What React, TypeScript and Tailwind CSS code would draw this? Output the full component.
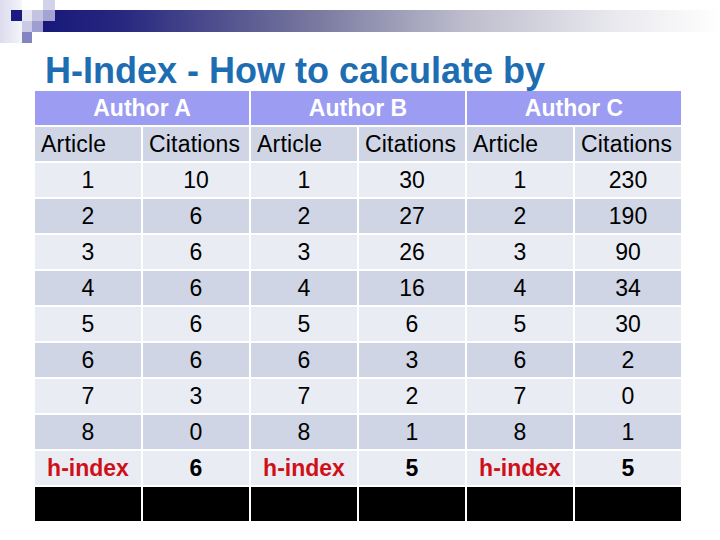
import React from "react";

const rows: string[][] = [
  ["1", "10", "1", "30", "1", "230"],
  ["2", "6", "2", "27", "2", "190"],
  ["3", "6", "3", "26", "3", "90"],
  ["4", "6", "4", "16", "4", "34"],
  ["5", "6", "5", "6", "5", "30"],
  ["6", "6", "6", "3", "6", "2"],
  ["7", "3", "7", "2", "7", "0"],
  ["8", "0", "8", "1", "8", "1"],
];

function Decoration() {
  return (
    <svg width="720" height="52" viewBox="0 0 720 52" className="block">
      <defs>
        <linearGradient id="bar" x1="0" y1="0" x2="1" y2="0">
          <stop offset="0" stopColor="#18187a" />
          <stop offset="0.12" stopColor="#282880" />
          <stop offset="0.38" stopColor="#72729c" />
          <stop offset="0.62" stopColor="#bcbccc" />
          <stop offset="0.84" stopColor="#e8e8ee" />
          <stop offset="1" stopColor="#ffffff" />
        </linearGradient>
        <linearGradient id="fade" x1="0" y1="0" x2="1" y2="0">
          <stop offset="0" stopColor="#dcdcee" />
          <stop offset="1" stopColor="#f4f4fa" />
        </linearGradient>
      </defs>
      <rect x="0" y="0" width="22" height="43" fill="url(#fade)" />
      <rect x="43" y="10" width="677" height="22" fill="url(#bar)" />
      <rect x="11" y="10" width="11" height="11" fill="#1a1a82" />
      <rect x="22" y="10" width="10" height="11" fill="#e6e6f2" />
      <rect x="32" y="10" width="11" height="11" fill="#c4c4e2" />
      <rect x="43" y="0" width="12" height="10" fill="#d2d2ea" />
      <rect x="43" y="10" width="12" height="11" fill="#a4a4d4" />
      <rect x="22" y="21" width="10" height="11" fill="#cacae6" />
      <rect x="32" y="21" width="11" height="11" fill="#9e9ed2" />
      <rect x="22" y="32" width="10" height="11" fill="#8484c2" />
    </svg>
  );
}

export default function App() {
  const font = { fontFamily: '"Liberation Sans", Arial, sans-serif' };
  return (
    <div className="w-[720px] h-[540px] bg-white overflow-hidden" style={font}>
      <Decoration />
      <div className="pl-[45px] h-[38px] leading-[38px] text-[36px] font-bold text-[#1d6db3] whitespace-nowrap">
        H-Index - How to calculate by
      </div>
      <div className="mt-[1px] ml-[35px] grid grid-cols-[repeat(6,106px)] auto-rows-[34px] gap-[2px] text-[23px] text-black">
        {["Author A", "Author B", "Author C"].map((a) => (
          <div
            key={a}
            className="col-span-2 bg-[#9c9cf3] text-white font-bold flex items-center justify-center"
          >
            {a}
          </div>
        ))}
        {["Article", "Citations", "Article", "Citations", "Article", "Citations"].map((h, i) => (
          <div key={i} className="bg-[#cfd5e4] flex items-center pl-[6px] tracking-[0.2px]">
            {h}
          </div>
        ))}
        {rows.map((r, ri) =>
          r.map((c, ci) => (
            <div
              key={`${ri}-${ci}`}
              className={`${ri % 2 === 0 ? "bg-[#e9ecf3]" : "bg-[#cfd5e4]"} flex items-center justify-center`}
            >
              {c}
            </div>
          ))
        )}
        {["h-index", "6", "h-index", "5", "h-index", "5"].map((c, i) => (
          <div
            key={`h${i}`}
            className={`bg-[#e9ecf3] flex items-center justify-center font-bold ${i % 2 === 0 ? "text-[#d01018]" : "text-black"}`}
          >
            {c}
          </div>
        ))}
        {[0, 1, 2, 3, 4, 5].map((i) => (
          <div key={`b${i}`} className="bg-black" />
        ))}
      </div>
    </div>
  );
}
